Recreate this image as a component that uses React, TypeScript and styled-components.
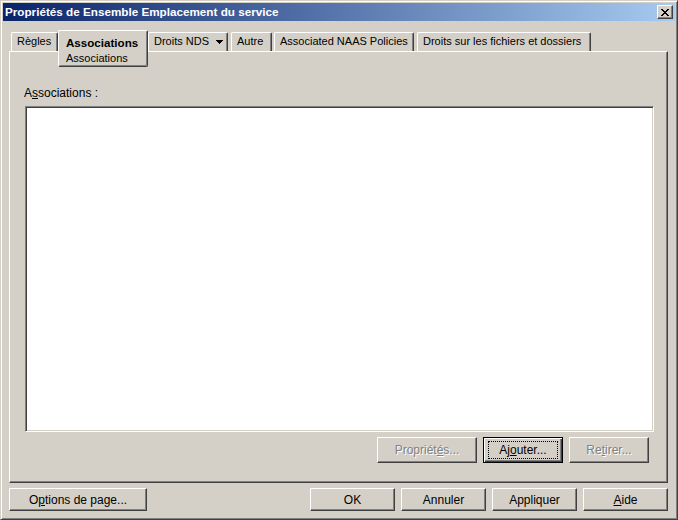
import React from "react";
import styled, { createGlobalStyle, css } from "styled-components";

const FACE = "#D4D0C8";

const GlobalStyle = createGlobalStyle`
  html, body { margin: 0; padding: 0; background: ${FACE}; }
  body {
    font-family: "Liberation Sans", Arial, sans-serif;
    font-size: 11px;
    color: #000;
  }
  * { box-sizing: border-box; }
`;

const Window = styled.div`
  width: 678px;
  height: 520px;
  background: ${FACE};
  border: 1px solid;
  border-color: ${FACE} #404040 #404040 ${FACE};
  box-shadow: inset 1px 1px #fff, inset -1px -1px #808080;
  padding: 2px;
  display: flex;
  flex-direction: column;
`;

const TitleBar = styled.div`
  height: 18px;
  flex: none;
  background: linear-gradient(to right, #0a246a, #a6caf0);
  display: flex;
  align-items: center;
  justify-content: space-between;
  padding: 0 2px;
`;

const TitleText = styled.span`
  color: #fff;
  font-weight: bold;
  font-size: 11.7px;
  line-height: 18px;
  white-space: nowrap;
`;

const CaptionButton = styled.div`
  width: 16px;
  height: 14px;
  background: ${FACE};
  border: 1px solid;
  border-color: #fff #404040 #404040 #fff;
  box-shadow: inset -1px -1px #808080;
  display: flex;
  align-items: center;
  justify-content: center;
  padding-right: 1px;
`;

const Body = styled.div`
  flex: 1;
  display: flex;
  flex-direction: column;
  padding: 9px 7px 6px 6px;
  min-height: 0;
`;

const TabStrip = styled.div`
  height: 21px;
  flex: none;
  display: flex;
  align-items: flex-start;
  padding-left: 2px;
`;

const Tab = styled.div<{ $w: number; $ml: number }>`
  width: ${(p) => p.$w}px;
  margin-left: ${(p) => p.$ml}px;
  height: 19px;
  margin-top: 2px;
  flex: none;
  display: flex;
  align-items: flex-start;
  padding: 2px 0 0 5px;
  line-height: 13px;
  white-space: nowrap;
  background: ${FACE};
  border-top: 1px solid #fff;
  border-left: 1px solid #fff;
  border-right: 1px solid #404040;
  border-radius: 2px 2px 0 0;
  box-shadow: inset -1px 0 #808080;
`;

const ActiveTab = styled.div<{ $w: number }>`
  width: ${(p) => p.$w}px;
  height: 37px;
  margin-bottom: -16px;
  flex: none;
  position: relative;
  z-index: 2;
  display: flex;
  flex-direction: column;
  padding: 5px 0 0 7px;
  background: ${FACE};
  border: 1px solid;
  border-color: #fff #404040 #404040 #fff;
  border-radius: 2px;
  box-shadow: inset -1px -1px #808080;
  white-space: nowrap;
`;

const ActiveTitle = styled.span`
  font-weight: bold;
  font-size: 11.6px;
  line-height: 13px;
`;

const ActiveSub = styled.span`
  line-height: 13px;
  margin-top: 3px;
`;

const TabArrow = styled.svg`
  margin: 5px 0 0 7px;
  flex: none;
`;

const Panel = styled.div`
  flex: 1;
  min-height: 0;
  display: flex;
  flex-direction: column;
  padding: 34px 13px 19px 15px;
  border: 1px solid;
  border-color: #fff #404040 #404040 #fff;
  box-shadow: inset -1px -1px #808080;
`;

const FieldLabel = styled.div`
  font-size: 12px;
  line-height: 14px;
  height: 14px;
  margin-left: -1px;
`;

const ListBox = styled.div`
  flex: 1;
  margin-top: 6px;
  background: #fff;
  border: 1px solid;
  border-color: #808080 #fff #fff #808080;
  box-shadow: inset 1px 1px #404040, inset -1px -1px ${FACE};
`;

const ButtonRow = styled.div`
  display: flex;
  justify-content: flex-end;
  gap: 6px;
  margin-top: 5px;
  padding-right: 5px;
`;

const Button = styled.div<{ $w: number; $h: number; $default?: boolean; $disabled?: boolean }>`
  position: relative;
  width: ${(p) => p.$w}px;
  height: ${(p) => p.$h}px;
  flex: none;
  display: flex;
  align-items: center;
  justify-content: center;
  background: ${FACE};
  font-size: 12px;
  white-space: nowrap;
  border: 1px solid;
  ${(p) =>
    p.$default
      ? css`
          border-color: #000;
          box-shadow: inset 1px 1px #fff, inset -1px -1px #404040, inset -2px -2px #808080;
          &::after {
            content: "";
            position: absolute;
            inset: 3px 4px 3px 4px;
            border: 1px dotted #000;
          }
        `
      : css`
          border-color: #fff #404040 #404040 #fff;
          box-shadow: inset -1px -1px #808080;
        `}
  ${(p) =>
    p.$disabled &&
    css`
      color: #808080;
      text-shadow: 1px 1px 0 #fff;
    `}
`;

const Mn = styled.span`
  text-decoration: underline;
`;

const Footer = styled.div`
  flex: none;
  display: flex;
  justify-content: space-between;
  margin-top: 5px;
`;

const FooterGroup = styled.div`
  display: flex;
  gap: 6px;
`;

const CloseGlyph = () => (
  <svg width="8" height="7" viewBox="0 0 8 7" shapeRendering="crispEdges">
    <path
      d="M0 0h2v1H0z M6 0h2v1H6z M1 1h2v1H1z M5 1h2v1H5z M2 2h4v1H2z M3 3h2v1H3z M2 4h4v1H2z M1 5h2v1H1z M5 5h2v1H5z M0 6h2v1H0z M6 6h2v1H6z"
      fill="#000"
    />
  </svg>
);

const tabs = [
  { label: "Droits NDS", w: 80, ml: 0, arrow: true },
  { label: "Autre", w: 41, ml: 3 },
  { label: "Associated NAAS Policies", w: 140, ml: 2 },
  { label: "Droits sur les fichiers et dossiers", w: 174, ml: 3 },
];

export default function App() {
  return (
    <>
      <GlobalStyle />
      <Window>
        <TitleBar>
          <TitleText>Propriétés de Ensemble Emplacement du service</TitleText>
          <CaptionButton>
            <CloseGlyph />
          </CaptionButton>
        </TitleBar>
        <Body>
          <TabStrip>
            <Tab $w={47} $ml={0}>Règles</Tab>
            <ActiveTab $w={90}>
              <ActiveTitle>Associations</ActiveTitle>
              <ActiveSub>Associations</ActiveSub>
            </ActiveTab>
            {tabs.map((t) => (
              <Tab key={t.label} $w={t.w} $ml={t.ml}>
                {t.label}
                {t.arrow && (
                  <TabArrow width="7" height="4" viewBox="0 0 7 4" shapeRendering="crispEdges">
                    <path d="M0 0h7v1H0z M1 1h5v1H1z M2 2h3v1H2z M3 3h1v1H3z" fill="#000" />
                  </TabArrow>
                )}
              </Tab>
            ))}
          </TabStrip>
          <Panel>
            <FieldLabel>
              A<Mn>s</Mn>sociations :
            </FieldLabel>
            <ListBox />
            <ButtonRow>
              <Button $w={100} $h={26} $disabled>
                <span>
                  Propriét<Mn>é</Mn>s...
                </span>
              </Button>
              <Button $w={80} $h={26} $default>
                <span>
                  Aj<Mn>o</Mn>uter...
                </span>
              </Button>
              <Button $w={80} $h={26} $disabled>
                <span>
                  Re<Mn>t</Mn>irer...
                </span>
              </Button>
            </ButtonRow>
          </Panel>
          <Footer>
            <Button $w={138} $h={23}>
              <span>
                O<Mn>p</Mn>tions de page...
              </span>
            </Button>
            <FooterGroup>
              <Button $w={85} $h={23}>OK</Button>
              <Button $w={85} $h={23}>Annuler</Button>
              <Button $w={85} $h={23}>Appliquer</Button>
              <Button $w={85} $h={23}>
                <span>
                  <Mn>A</Mn>ide
                </span>
              </Button>
            </FooterGroup>
          </Footer>
        </Body>
      </Window>
    </>
  );
}
